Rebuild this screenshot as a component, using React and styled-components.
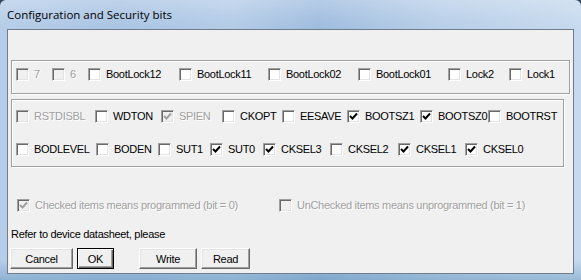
import styled, { createGlobalStyle } from "styled-components";

const GlobalStyle = createGlobalStyle`
  html, body {
    margin: 0;
    padding: 0;
    background: #34475c;
  }
  body {
    font-family: "Liberation Sans", Arial, sans-serif;
  }
`;

const groupOne = [
  { label: "7", width: 36, disabled: true },
  { label: "6", width: 36, disabled: true },
  { label: "BootLock12", width: 91 },
  { label: "BootLock11", width: 89 },
  { label: "BootLock02", width: 90 },
  { label: "BootLock01", width: 90 },
  { label: "Lock2", width: 61 },
  { label: "Lock1", width: 50 },
];

const rowA = [
  { label: "RSTDISBL", width: 79, disabled: true },
  { label: "WDTON", width: 66 },
  { label: "SPIEN", width: 61, disabled: true, checked: true },
  { label: "CKOPT", width: 60 },
  { label: "EESAVE", width: 65 },
  { label: "BOOTSZ1", width: 73, checked: true },
  { label: "BOOTSZ0", width: 68, checked: true },
  { label: "BOOTRST", width: 70 },
];

const rowB = [
  { label: "BODLEVEL", width: 80 },
  { label: "BODEN", width: 62 },
  { label: "SUT1", width: 52 },
  { label: "SUT0", width: 53, checked: true },
  { label: "CKSEL3", width: 67, checked: true },
  { label: "CKSEL2", width: 68 },
  { label: "CKSEL1", width: 67, checked: true },
  { label: "CKSEL0", width: 60, checked: true },
];

const Check = ({ label, width, checked, disabled }) => (
  <Item $width={width}>
    <Box $disabled={disabled}>
      {checked && (
        <svg width="11" height="11" viewBox="0 0 11 11">
          <polyline
            points="2,5 4.5,7.5 9,2.5"
            fill="none"
            stroke={disabled ? "#a0a0a0" : "#000"}
            strokeWidth="2"
          />
        </svg>
      )}
    </Box>
    <Label $disabled={disabled}>{label}</Label>
  </Item>
);

const App = () => {
  return (
    <>
      <GlobalStyle />
      <Window>
        <TitleBar>Configuration and Security bits</TitleBar>
        <Frame>
          <Client>
            <GroupOne>
              {groupOne.map((c) => (
                <Check key={c.label} {...c} />
              ))}
            </GroupOne>
            <GroupTwo>
              <Row>
                {rowA.map((c) => (
                  <Check key={c.label} {...c} />
                ))}
              </Row>
              <Row>
                {rowB.map((c) => (
                  <Check key={c.label} {...c} />
                ))}
              </Row>
            </GroupTwo>
            <Legend>
              <Check
                label="Checked items means programmed (bit = 0)"
                width={262}
                checked
                disabled
              />
              <Check
                label="UnChecked items means unprogrammed (bit = 1)"
                width={260}
                disabled
              />
            </Legend>
            <Note>Refer to device datasheet, please</Note>
            <Buttons>
              <Button $w={63}>Cancel</Button>
              <Button $w={37} $default>
                OK
              </Button>
              <Button $w={58} $gap={25}>
                Write
              </Button>
              <Button $w={49}>Read</Button>
            </Buttons>
          </Client>
        </Frame>
      </Window>
    </>
  );
};

export default App;

const Window = styled.div`
  width: 581px;
  height: 280px;
  box-sizing: border-box;
  display: flex;
  flex-direction: column;
  border-radius: 6px 6px 0 0;
  overflow: hidden;
  background: linear-gradient(
    90deg,
    #b6cde8 0%,
    #a9c4e3 20%,
    #b3cbe7 40%,
    #9ebcde 55%,
    #b7cee8 75%,
    #c6d9ee 100%
  );
`;

const TitleBar = styled.div`
  height: 28px;
  flex: none;
  display: flex;
  align-items: center;
  padding: 0 7px 1px;
  font-family: "Open Sans", "Liberation Sans", sans-serif;
  font-size: 11.5px;
  color: #000;
  background: linear-gradient(
    180deg,
    rgba(255, 255, 255, 0.25) 0%,
    rgba(255, 255, 255, 0.08) 60%,
    rgba(255, 255, 255, 0) 100%
  );
`;

const Frame = styled.div`
  flex: 1;
  display: flex;
  padding: 0 7px 6px;
  background: linear-gradient(
    180deg,
    rgba(255, 255, 255, 0) 0%,
    rgba(255, 255, 255, 0) 92%,
    rgba(70, 130, 170, 0.35) 100%
  );
`;

const Client = styled.div`
  flex: 1;
  display: flex;
  flex-direction: column;
  background: #f0f0f0;
  border: 1px solid #6e7c8c;
  padding: 30px 3px 0;
  font-size: 11px;
  letter-spacing: -0.3px;
  color: #000;
`;

const GroupOne = styled.div`
  display: flex;
  align-items: center;
  width: 559px;
  height: 34px;
  box-sizing: border-box;
  padding: 6px 0 12px 4px;
  border: 1px solid #a0a0a0;
  box-shadow: inset 1px 1px 0 #fff, 1px 1px 0 #fff;
`;

const GroupTwo = styled.div`
  display: flex;
  flex-direction: column;
  gap: 20px;
  width: 553px;
  height: 68px;
  box-sizing: border-box;
  margin-top: 5px;
  padding: 10px 0 10px 4px;
  border: 1px solid #a0a0a0;
  box-shadow: inset 1px 1px 0 #fff, 1px 1px 0 #fff;
`;

const Row = styled.div`
  display: flex;
  align-items: center;
  height: 13px;
`;

const Item = styled.div`
  display: flex;
  align-items: center;
  flex: none;
  width: ${(p) => p.$width}px;
  height: 13px;
  white-space: nowrap;
`;

const Box = styled.span`
  flex: none;
  width: 13px;
  height: 13px;
  box-sizing: border-box;
  display: flex;
  align-items: center;
  justify-content: center;
  background: ${(p) => (p.$disabled ? "#f0f0f0" : "#fff")};
  border: 1px solid;
  border-color: #a0a0a0 #fff #fff #a0a0a0;
  box-shadow: inset 1px 1px 0 #696969, inset -1px -1px 0 #e3e3e3;
`;

const Label = styled.span`
  margin-left: 5px;
  line-height: 13px;
  color: ${(p) => (p.$disabled ? "#a0a0a0" : "#000")};
  text-shadow: ${(p) => (p.$disabled ? "1px 1px 0 #fff" : "none")};
`;

const Legend = styled.div`
  display: flex;
  align-items: center;
  margin-top: 32px;
  padding-left: 6px;
`;

const Note = styled.div`
  margin-top: 16px;
  line-height: 13px;
`;

const Buttons = styled.div`
  display: flex;
  margin-top: 7px;
  margin-left: -1px;
  gap: 4px;
`;

const Button = styled.button`
  width: ${(p) => p.$w}px;
  height: 21px;
  margin-left: ${(p) => (p.$gap ? p.$gap - 4 : 0)}px;
  padding: 0;
  font-family: "Liberation Sans", Arial, sans-serif;
  font-size: 11px;
  letter-spacing: -0.3px;
  color: #000;
  background: #f0f0f0;
  border: 1px solid;
  border-color: ${(p) =>
    p.$default ? "#000" : "#fff #696969 #696969 #fff"};
  box-shadow: ${(p) =>
    p.$default
      ? "inset 1px 1px 0 #fff, inset -1px -1px 0 #696969, inset -2px -2px 0 #a0a0a0"
      : "inset -1px -1px 0 #a0a0a0, inset 1px 1px 0 #e3e3e3"};
`;
